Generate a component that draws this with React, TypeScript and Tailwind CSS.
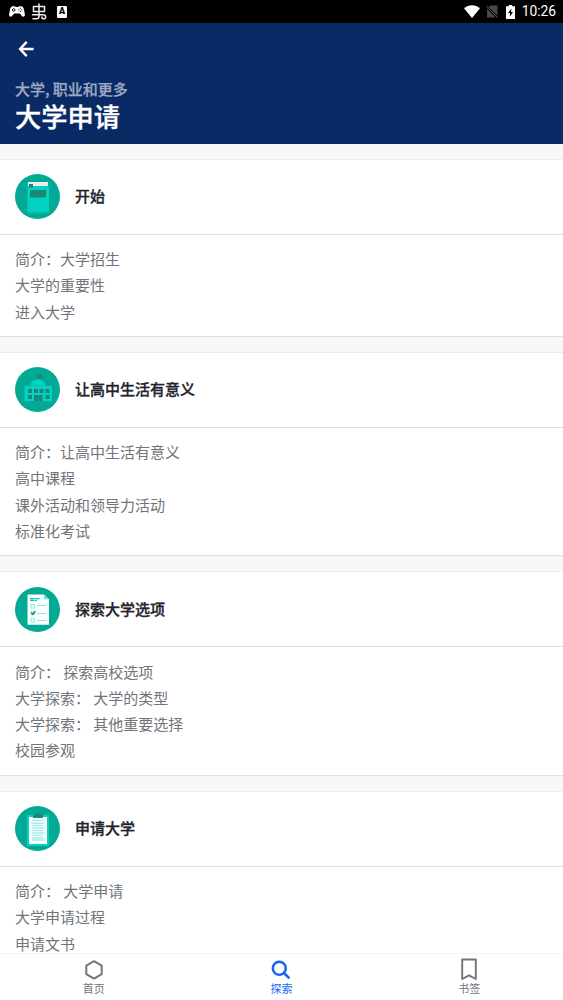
import React from "react"

const sections = [
	{
		title: "开始",
		icon: <BookIcon />,
		items: ["简介：大学招生", "大学的重要性", "进入大学"],
	},
	{
		title: "让高中生活有意义",
		icon: <SchoolIcon />,
		items: ["简介：让高中生活有意义", "高中课程", "课外活动和领导力活动", "标准化考试"],
	},
	{
		title: "探索大学选项",
		icon: <ChecklistIcon />,
		items: [
			"简介： 探索高校选项",
			"大学探索： 大学的类型",
			"大学探索： 其他重要选择",
			"校园参观",
		],
	},
	{
		title: "申请大学",
		icon: <ClipboardIcon />,
		items: ["简介： 大学申请", "大学申请过程", "申请文书"],
	},
]

function BookIcon() {
	return (
		<svg viewBox="0 0 45 45" className="w-[45px] h-[45px]">
			<circle cx="22.5" cy="22.5" r="22.5" fill="#02a994" />
			<path d="M12 8h21v4H12z" fill="#ececec" />
			<path d="M12 8h1v30h-1z" fill="#08bda9" />
			<path d="M13 12h21v26.5H13z" fill="#00d2c3" />
			<path d="M12 37.5h22v1H12z" fill="#08bda9" />
			<path d="M14 10h4v3.5h-4z" fill="#1f8574" />
			<path d="M15 16h16v7.5H15z" fill="#1f8574" />
		</svg>
	)
}

function SchoolIcon() {
	return (
		<svg viewBox="0 0 45 45" className="w-[45px] h-[45px]">
			<circle cx="22.5" cy="22.5" r="22.5" fill="#02a994" />
			<path d="M22.3 7.5v5h.8v-1h4.3v-4z" fill="#1f8574" />
			<path d="M15.5 18a7.3 5.8 0 0 1 14.6 0z" fill="#00d2c3" />
			<path d="M15 18h16v1H15z" fill="#08bda9" />
			<path d="M9.5 19h27.5v15H9.5z" fill="#00d2c3" />
			<path
				d="M13 22h4v4h-4zM19 22h4v4h-4zM24.5 22h4v4h-4zM30.5 22h4v4h-4zM13 28h4v4h-4zM30.5 28h4v4h-4zM19 28h8.5v6H19z"
				fill="#1f8574"
			/>
			<path d="M23 28h.7v6H23z" fill="#02a994" />
		</svg>
	)
}

function ChecklistIcon() {
	return (
		<svg viewBox="0 0 45 45" className="w-[45px] h-[45px]">
			<circle cx="22.5" cy="22.5" r="22.5" fill="#02a994" />
			<path d="M12.5 7.5H29l5 4.8v25.4H12.5z" fill="#fafffe" />
			<path d="M29 7.5l5 4.8h-5z" fill="#66e8dc" />
			<path d="M15 11.6h10.2M15 13.4h7" stroke="#00c9b9" strokeWidth="1.2" strokeDasharray="4.5 .6" />
			<g fill="none" stroke="#86e5dd" strokeWidth=".9">
				<path d="M16 17.5h3.5V21H16zM16 24.2h3.5v3.5H16zM16 31.5h3.5V35H16z" />
				<path d="M22 18.5h9M22 26.5h9M22 33.5h9" />
			</g>
			<path d="M16.3 25.5l1.4 1.7 2.7-3" fill="none" stroke="#167a6b" strokeWidth="1.3" />
		</svg>
	)
}

function ClipboardIcon() {
	return (
		<svg viewBox="0 0 45 45" className="w-[45px] h-[45px]">
			<circle cx="22.5" cy="22.5" r="22.5" fill="#02a994" />
			<rect x="12" y="9" width="22" height="31" rx=".8" fill="#00d2c3" />
			<path d="M14 11h18v27H14z" fill="#fff" />
			<path
				d="M17 14.5h12M16.5 17.2h13M16.5 19.5h11M16.5 22h13M16.5 24.5h12M16.5 27h13M16.5 29.5h11.5M16.5 32h12.5M17 34h12"
				stroke="#a6eee7"
				strokeWidth="1.4"
			/>
			<path d="M18 12V9h2.5a2.6 2.8 0 0 1 5 0H28v3z" fill="#1f8574" />
		</svg>
	)
}

function StatusBar() {
	return (
		<div className="flex h-[23px] shrink-0 items-center justify-between bg-black text-white">
			<div className="flex items-center pl-[9px]">
				{/* gamepad */}
				<svg viewBox="0 0 16 11" className="h-[11px] w-4">
					<path
						d="M4 .2h2l.8.8h2.4L10 .2h2c1.800 0 2.600 1.400 3 3.400l.9 4.800c.3 2-1.700 3-3 1.700L10.800 7.500H5.200L3.100 10.100C1.800 11.400-.2 10.400.1 8.400L1 3.600C1.400 1.600 2.200.2 4 .2z"
						fill="#fff"
					/>
					<circle cx="4.7" cy="4" r="1.3" fill="none" stroke="#000" strokeWidth=".9" />
					<path d="M11.3 1.8v1M11.3 5v1M9.3 3.9h1M12.3 3.9h1" stroke="#000" />
				</svg>
				<svg viewBox="0 0 16 17" className="ml-1.5 h-[17px] w-4">
					<g fill="none" stroke="#eee" strokeWidth="1.5" strokeLinecap="round" strokeLinejoin="round">
						<path d="M2.5 3.5h11v5h-11zM8 1v12.500c0 1.500-1 2.300-2.500 2.300H2" />
						<path d="M1.500 11.700H12c3.500 0 3.500 4.100.5 4.100-1.500 0-2-.8-1.500-1.800" />
					</g>
				</svg>
				<div className="ml-2.5 flex h-[12px] w-[10px] items-center justify-center rounded-[1px] bg-white font-['Roboto',sans-serif] text-[9px] font-black leading-none text-black">
					A
				</div>
			</div>
			<div className="flex items-center pr-[7px]">
				<svg viewBox="0 0 16 13" className="h-[13px] w-4">
					<path d="M0 3.200C4.500-.8 11.500-.8 16 3.200L8 13z" fill="#fff" />
				</svg>
				<svg viewBox="0 0 12 13" className="ml-1.5 h-[13px] w-3">
					<path d="M4 .5h7.500v10.200L2.700 1.900zM1 3.500l8.500 9H1z" fill="#484848" />
					<path d="M.4.800l11 11.700" stroke="#606060" />
				</svg>
				<svg viewBox="0 0 9 14" className="ml-[8px] h-[14px] w-[9px]">
					<path d="M2.8 0h3.4v1.200H9V14H0V1.200h2.800z" fill="#fff" />
					<path d="M5.5 3.500L2 8h2v3.500L7 7H5z" fill="#000" />
				</svg>
				<span className="ml-[7px] font-['Roboto',sans-serif] text-[13.8px] leading-none">10:26</span>
			</div>
		</div>
	)
}

function Header() {
	return (
		<header className="h-[121px] shrink-0 bg-[#0a2a66] px-[15px] pt-[18px] text-white">
			<svg viewBox="0 0 16 16" className="ml-[3px] h-4 w-4">
				<path
					d="M8 1.7L2 8l6 6.300M2.200 8H14.600"
					fill="none"
					stroke="#fff"
					strokeWidth="2.5"
					strokeLinecap="round"
					strokeLinejoin="round"
				/>
			</svg>
			<p className="mt-[22px] text-[15px] font-medium leading-5 text-[#9da8c2] [-webkit-text-stroke:0.25px_#9da8c2]">
				大学, 职业和更多
			</p>
			<h1 className="text-[26.25px] font-medium leading-[34px] [-webkit-text-stroke:0.3px_#fff]">大学申请</h1>
		</header>
	)
}

function BottomNav() {
	return (
		<nav className="grid h-[47px] shrink-0 grid-cols-3 border-t border-[#f2f2f3] bg-white text-[11px] leading-4 text-[#71747a]">
			<div className="flex flex-col items-center pt-[5px]">
				<svg viewBox="0 0 20 21" className="h-[21px] w-5">
					<path d="M10 2.200l7.700 4.400v8.600L10 19.600l-7.700-4.400V6.600z" fill="none" stroke="#71747a" strokeWidth="2" strokeLinejoin="round" />
				</svg>
				<span>首页</span>
			</div>
			<div className="flex flex-col items-center pt-[5px] text-[#1865f2]">
				<svg viewBox="0 0 20 21" className="h-[21px] w-5">
					<circle cx="8.3" cy="9.2" r="6.5" fill="none" stroke="#1865f2" strokeWidth="2.5" />
					<path d="M13 14l4.700 4.700" stroke="#1865f2" strokeWidth="2.6" strokeLinecap="round" />
				</svg>
				<span>探索</span>
			</div>
			<div className="flex flex-col items-center pt-1">
				<svg viewBox="0 0 16 22" className="h-[22px] w-4">
					<path d="M1.200 1.500h13.600v19.500L8 17.400l-6.800 3.600z" fill="none" stroke="#71747a" strokeWidth="1.9" strokeLinejoin="round" />
				</svg>
				<span>书签</span>
			</div>
		</nav>
	)
}

export default function App() {
	return (
		<div className="flex h-[1000px] w-full flex-col overflow-hidden bg-[#f7f8fa] font-['Noto_Sans_CJK_SC',sans-serif]">
			<StatusBar />
			<Header />
			<main className="flex min-h-0 flex-1 flex-col gap-[15px] overflow-hidden pt-[14.6px]">
				{sections.map((section) => (
					<section key={section.title} className="shrink-0 border-y border-[#dfe0e2] border-t-[#ebecee] bg-white">
						<div className="flex h-[75.25px] items-center gap-[15px] border-b border-[#dfe0e2] px-[15px]">
							{section.icon}
							<h2 className="pb-px text-[15px] font-medium leading-[22px] text-[#21242c] [-webkit-text-stroke:0.3px_#21242c]">
								{section.title}
							</h2>
						</div>
						<ul className="px-[15px] pb-[11px] pt-[11.2px] text-[15px] leading-[26.25px] text-[#71747a]">
							{section.items.map((item) => (
								<li key={item}>{item}</li>
							))}
						</ul>
					</section>
				))}
			</main>
			<BottomNav />
		</div>
	)
}
